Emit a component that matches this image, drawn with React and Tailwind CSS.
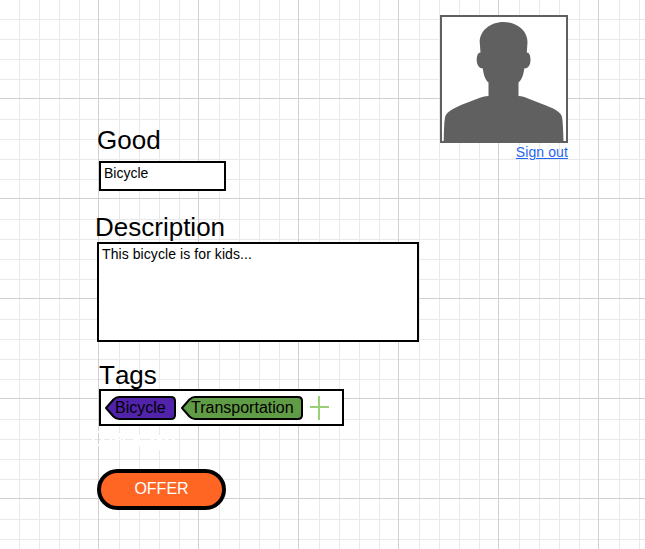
const minor = [19, 39, 59, 79];

function Grid() {
  return (
    <svg className="absolute inset-0" width="645" height="549" shapeRendering="crispEdges">
      <defs>
        <pattern id="grid" width="100" height="100" patternUnits="userSpaceOnUse">
          {minor.map((n) => (
            <g key={n} fill="#e9e9e9">
              <rect x={n} y="0" width="1" height="100" />
              <rect x="0" y={n} width="100" height="1" />
            </g>
          ))}
          <rect x="98" y="0" width="1" height="100" fill="#d0d0d0" />
          <rect x="0" y="98" width="100" height="1" fill="#d0d0d0" />
        </pattern>
      </defs>
      <rect width="645" height="549" fill="url(#grid)" />
      {/* small breaks in the grid below the tags */}
      <g fill="#fff">
        <rect x="92" y="439" width="2" height="1" />
        <rect x="101" y="439" width="3" height="1" />
        <rect x="110" y="439" width="2" height="1" />
        <rect x="115" y="439" width="6" height="1" />
        <rect x="123" y="439" width="2" height="1" />
        <rect x="133" y="439" width="7" height="1" />
        <rect x="151" y="439" width="3" height="1" />
        <rect x="157" y="439" width="5" height="1" />
        <rect x="165" y="439" width="3" height="1" />
        <rect x="172" y="439" width="3" height="1" />
        <rect x="98" y="431" width="1" height="2" />
        <rect x="98" y="444" width="1" height="2" />
        <rect x="119" y="433" width="1" height="4" />
        <rect x="139" y="435" width="1" height="11" />
        <rect x="159" y="435" width="1" height="15" />
      </g>
    </svg>
  );
}

function Avatar() {
  return (
    <div className="h-32 w-32 border-2 border-[#606060] bg-white">
      <svg width="124" height="124" viewBox="442 17 124 124" className="block" fill="#606060">
        <path d="M503.500 22C517 22 527.500 31 527.500 42L526.800 52.500C529.500 52.500 530.500 56 530.500 60C530.500 65 528 68.500 524.300 68.500C523.500 75 521.500 80 518.500 82.500V96C522 96 525 97.300 528 98.500L546 105.500C556 109.500 561.500 112.500 562.200 118C563 124 563.200 132 563.500 141H443.700C443.900 132 444 124 444.900 118C445.700 112.500 451 109.500 461 105L478 98.500C482 97 484.500 96 488.500 96V82.500C485.500 80 483.500 75 482.800 68.500C479.500 68.500 476.700 65 476.700 60C476.700 56 478 52.500 480.500 52.500L479.700 42C479.700 31 490 22 503.500 22Z" />
      </svg>
    </div>
  );
}

function Tag({ label, width, fill }) {
  return (
    <div className="relative h-6" style={{ width }}>
      <svg className="absolute inset-0 overflow-visible" width={width} height="24">
        <path
          d={`M1 12L8.500 3.500Q11 1 14 1H${width - 5}Q${width - 1} 1 ${width - 1} 5V19Q${width - 1} 23 ${width - 5} 23H14Q11 23 8.500 20.500Z`}
          fill={fill}
          stroke="#000"
          strokeWidth="2"
          strokeLinejoin="round"
        />
      </svg>
      <span className="relative block pl-[10px] text-base leading-6">{label}</span>
    </div>
  );
}

export default function App() {
  return (
    <div className="relative h-[549px] w-[645px] overflow-hidden bg-white font-['Liberation_Sans',Arial,sans-serif] text-black">
      <Grid />
      <div className="relative flex pt-[15px]">
        <main className="flex w-[440px] flex-col items-start pt-[109px]">
          <h1 className="ml-[97px] h-[37px] text-[26px] leading-8">Good</h1>
          <div className="ml-[99px] h-[30px] w-[127px] border-2 border-black bg-white pl-[3px] pt-[2px] text-[14px] leading-4">Bicycle</div>
          <h2 className="ml-[95px] mt-5 h-[31px] text-[26px] leading-8">Description</h2>
          <div className="ml-[97px] h-[100px] w-[322px] border-2 border-black bg-white pl-[3px] pt-[2px] text-[14px] leading-4 tracking-[0.08px]">This bicycle is for kids...</div>
          <h2 className="ml-[99px] mt-[17px] h-[30px] text-[26px] leading-8 [font-kerning:none]">Tags</h2>
          <div className="ml-[99px] flex h-[37px] w-[245px] items-center gap-[5px] border-2 border-black bg-white pl-1">
            <Tag label="Bicycle" width={71} fill="#5122aa" />
            <Tag label="Transportation" width={122} fill="#609b45" />
            <svg width="19" height="24" className="ml-0.5" fill="#97d077">
              <rect x="0" y="10" width="19" height="2" />
              <rect x="8" y="0" width="2" height="24" />
            </svg>
          </div>
          <button className="ml-[97px] mt-[43px] h-[41px] w-[129px] rounded-full border-4 border-black bg-[#ff6624] pb-px text-base leading-6 text-white">OFFER</button>
        </main>
        <aside className="flex w-32 flex-col items-end">
          <Avatar />
          <a className="mt-px text-[14px] leading-4 tracking-[0.1px] text-[#1f66f0] underline" href="#">Sign out</a>
        </aside>
      </div>
    </div>
  );
}
